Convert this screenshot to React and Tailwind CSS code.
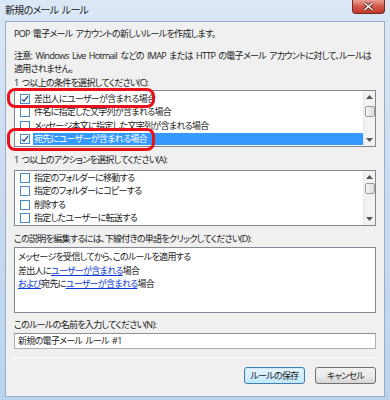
import React from "react";

const font = { fontFamily: '"Open Sans", "Noto Sans CJK JP", sans-serif', fontFeatureSettings: '"palt" 1' };

function Check({ on }) {
  return (
    <span className="w-[10px] h-[10px] border border-[#4d87c0] bg-white flex items-center justify-center shrink-0">
      {on && (
        <svg width="8" height="8" viewBox="0 0 8 8">
          <path d="M1 4.2 L3 6.3 L7 1.2" fill="none" stroke="#2a5d9a" strokeWidth="1.4" />
        </svg>
      )}
    </span>
  );
}

function Scroll({ thumbTop }) {
  return (
    <div className="w-[12px] self-stretch bg-[#f2f2f2] border-l border-[#e6e6e6] flex flex-col items-center relative">
      <svg width="7" height="4" viewBox="0 0 7 4" className="mt-[4px]"><path d="M3.5 0 L7 4 L0 4 Z" fill="#555" /></svg>
      <div className={`absolute left-[1px] w-[10px] h-[11px] rounded-[2px] border border-[#9a9a9a] bg-gradient-to-r from-[#f4f4f4] to-[#dcdcdc] ${thumbTop}`} />
      <div className="flex-1" />
      <svg width="7" height="4" viewBox="0 0 7 4" className="mb-[4px]"><path d="M0 0 L7 0 L3.5 4 Z" fill="#555" /></svg>
    </div>
  );
}

function Row({ on, text, sel }) {
  return (
    <div className="flex items-center h-[14px]">
      <Check on={on} />
      <span className={`ml-[3px] flex-1 h-[12px] leading-[12px] pl-[1px] whitespace-nowrap ${sel ? "bg-[#3399ff] text-white" : ""}`}>{text}</span>
    </div>
  );
}

export default function App() {
  return (
    <div className="w-[390px] h-[400px] relative bg-gradient-to-b from-[#dbe7f5] via-[#c8dbf1] to-[#bcd3ee] text-[9px] tracking-[-0.7px] [word-spacing:1.5px] text-[#1a1a1a]" style={font}>
      <div className="h-[21px] flex items-center pl-[5px] text-[10px] text-[#222]">新規のメール ルール</div>
      <div className="absolute top-0 right-[5px] w-[33px] h-[14px] rounded-b-[4px] border border-t-0 border-[#7a2a22] bg-gradient-to-b from-[#e8a093] via-[#d2584a] to-[#c0392b] flex items-center justify-center">
        <svg width="11" height="9" viewBox="0 0 11 9">
          <path d="M1.5 1 L9.5 8 M9.5 1 L1.5 8" stroke="#5a1d18" strokeWidth="3" />
          <path d="M1.5 1 L9.5 8 M9.5 1 L1.5 8" stroke="#fff" strokeWidth="1.6" />
        </svg>
      </div>

      <div className="mx-[5px] h-[376px] bg-[#f0f0f0] border border-[#98adc6] px-[8px] flex flex-col">
        <div className="mt-[5px] h-[14px] leading-[14px]">POP 電子メール アカウントの新しいルールを作成します。</div>
        <div className="mt-[8px] leading-[13px]">注意: Windows Live Hotmail などの IMAP または HTTP の電子メール アカウントに対して、ルールは適用されません。</div>
        <div className="mt-[1px] h-[14px] leading-[14px]">1 つ以上の条件を選択してください(C):</div>
        <div className="h-[57px] bg-white border border-[#828790] flex">
          <div className="flex-1 pl-[5px] pt-[1px] flex flex-col overflow-hidden">
            <Row on text="差出人にユーザーが含まれる場合" />
            <Row text="件名に指定した文字列が含まれる場合" />
            <Row text="メッセージ本文に指定した文字列が含まれる場合" />
            <Row on sel text="宛先にユーザーが含まれる場合" />
          </div>
          <Scroll thumbTop="top-[15px]" />
        </div>
        <div className="mt-[6px] h-[14px] leading-[14px]">1 つ以上のアクションを選択してください(A):</div>
        <div className="mt-[3px] h-[56px] bg-white border border-[#828790] flex">
          <div className="flex-1 pl-[5px] flex flex-col overflow-hidden">
            <Row text="指定のフォルダーに移動する" />
            <Row text="指定のフォルダーにコピーする" />
            <Row text="削除する" />
            <Row text="指定したユーザーに転送する" />
          </div>
          <Scroll thumbTop="top-[12px]" />
        </div>
        <div className="mt-[6px] h-[14px] leading-[14px]">この説明を編集するには、下線付きの単語をクリックしてください(D):</div>
        <div className="mt-[1px] h-[66px] bg-white border border-[#828790] px-[3px] pt-[2px] leading-[13.5px]">
          <div>メッセージを受信してから、このルールを適用する</div>
          <div>差出人に<span className="text-[#0b3bd6] underline">ユーザーが含まれる</span>場合</div>
          <div><span className="text-[#0b3bd6] underline">および</span>宛先に<span className="text-[#0b3bd6] underline">ユーザーが含まれる</span>場合</div>
        </div>
        <div className="mt-[5px] h-[14px] leading-[14px]">このルールの名前を入力してください(N):</div>
        <div className="mt-[1px] h-[16px] bg-white border border-[#abadb3] border-t-[#8e8f8f] px-[3px] leading-[14px]">新規の電子メール ルール #1</div>
        <div className="mt-[8px] h-[1px] bg-[#a0a0a0] border-b border-white" />
        <div className="mt-[9px] flex justify-end gap-[10px]">
          <button className="w-[61px] h-[17px] rounded-[3px] border border-[#3c7fb1] bg-gradient-to-b from-[#eaf6fd] to-[#bee6fd] shadow-[inset_0_0_0_1px_#cdeafd] text-[9px] leading-[15px]">ルールの保存</button>
          <button className="w-[61px] h-[17px] rounded-[3px] border border-[#707070] bg-gradient-to-b from-[#f2f2f2] via-[#ebebeb] to-[#d5d5d5] text-[9px] leading-[15px]">キャンセル</button>
        </div>
      </div>

      <div className="absolute left-[7px] top-[88px] w-[148px] h-[20px] rounded-[8px] border-[3px] border-[#e8101a]" />
      <div className="absolute left-[7px] top-[128px] w-[148px] h-[23px] rounded-[8px] border-[3px] border-[#e8101a]" />
    </div>
  );
}
